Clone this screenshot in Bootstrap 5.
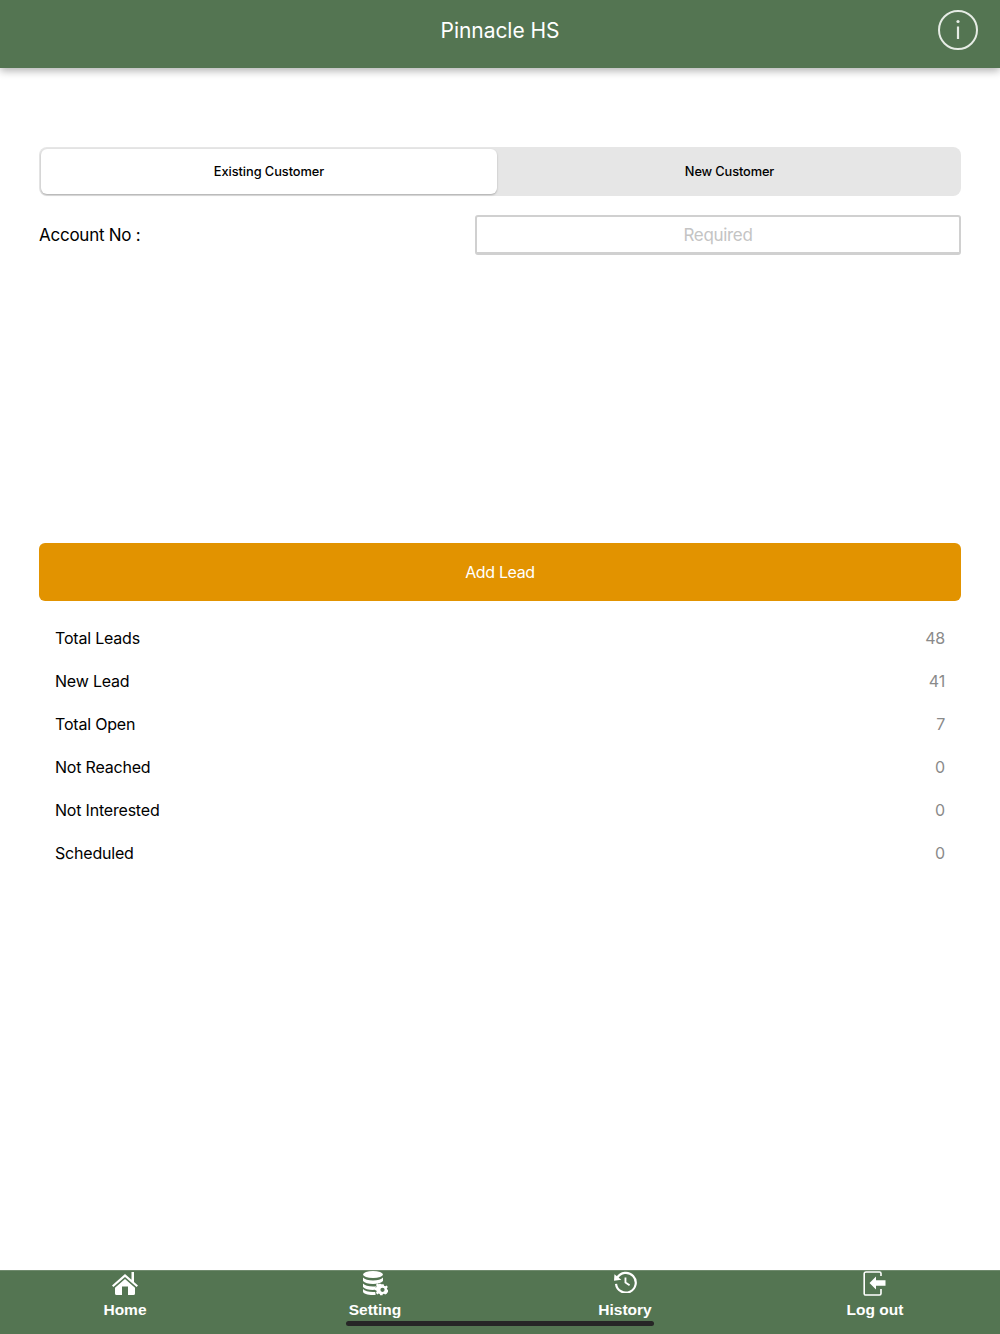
<!DOCTYPE html>
<html lang="en">
<head>
<meta charset="utf-8">
<title>Pinnacle HS</title>
<link href="https://cdn.jsdelivr.net/npm/bootstrap@5.3.0/dist/css/bootstrap.min.css" rel="stylesheet">
<style>
html,body{height:100%;}
body{font-family:Inter,"Liberation Sans",sans-serif;color:#000;background:#fff;overflow:hidden;}
.shell{height:1334px;}
.topbar{height:68px;background:#547552;color:#fff;box-shadow:0 3px 8px rgba(0,0,0,.3);display:grid;grid-template-columns:1fr auto 1fr;align-items:center;padding:0 22px 8px;position:relative;}
.topbar-title{font-size:21px;line-height:24px;letter-spacing:-.05px;padding-top:1px;}
.info-ic{width:40px;height:40px;justify-self:end;display:block;}
.content{padding:79px 39px 0;}
.segment{height:49px;background:#e6e6e6;border-radius:8px;padding:2px;}
.seg-item{font-size:12.800px;font-weight:500;line-height:16px;letter-spacing:-.06px;}
.seg-active{width:456px;background:#fff;border-radius:6px;box-shadow:0 1px 2px rgba(0,0,0,.25);}
.seg-rest{flex:1;padding-left:3px;letter-spacing:-.12px;}
.field-row{margin-top:19px;height:40px;}
.field-label{font-size:17px;letter-spacing:-.25px;padding-top:2px;}
.field-input{width:486px;height:40px;border:2px solid #d0d0d0;border-radius:3px;border-bottom-width:3px;text-align:center;font-size:17px;padding:1px 0 0;font-family:inherit;letter-spacing:-.3px;outline:none;box-shadow:none;}
.field-input::placeholder{color:#c4c4c4;opacity:1;}
.add-btn{display:block;width:100%;margin-top:288px;height:58px;background:#e29300;border:0;border-radius:6px;color:#fff;font-size:16px;letter-spacing:-.35px;padding:0;}
.add-btn:hover{background:#e29300;color:#fff;}
.stats{margin-top:15px;}
.stats .list-group-item{height:43px;border:0;padding:0 16px;background:transparent;font-size:16px;letter-spacing:-.2px;color:#000;}
.stat-val{color:#8a8a8a;}
.tabbar{height:64px;background:#547552;position:relative;border-top:1px solid #6f8a6d;}
.tab-item{flex:1 1 0;color:#fff;}
.tab-ic{height:26px;display:flex;align-items:flex-start;justify-content:center;}
.tab-lbl{font-family:"Liberation Sans",Arial,sans-serif;font-weight:700;font-size:15.500px;line-height:18px;margin-top:4px;}
.home-bar{position:absolute;left:346px;bottom:8px;width:308px;height:5px;border-radius:3px;background:#262626;}
</style>
</head>
<body>
<div class="shell d-flex flex-column">
  <header class="topbar">
    <span></span>
    <div class="topbar-title">Pinnacle HS</div>
    <svg class="info-ic" viewBox="0 0 40 40" fill="none" stroke="#e6ece5" stroke-width="2">
      <circle cx="20" cy="20" r="19"/>
      <path d="M20 16.500V29" stroke-width="2.200"/>
      <circle cx="20" cy="11.500" r="1.600" fill="#e6ece5" stroke="none"/>
    </svg>
  </header>

  <main class="content flex-grow-1">
    <div class="segment d-flex">
      <div class="seg-item seg-active d-flex align-items-center justify-content-center">Existing Customer</div>
      <div class="seg-item seg-rest d-flex align-items-center justify-content-center">New Customer</div>
    </div>
    <div class="field-row d-flex align-items-center justify-content-between">
      <label class="field-label" for="acct">Account No :</label>
      <input id="acct" class="field-input form-control" placeholder="Required">
    </div>
    <button class="add-btn btn" type="button">Add Lead</button>
    <ul class="stats list-group list-group-flush">
      <li class="list-group-item d-flex justify-content-between align-items-center"><span>Total Leads</span><span class="stat-val">48</span></li>
      <li class="list-group-item d-flex justify-content-between align-items-center"><span>New Lead</span><span class="stat-val">41</span></li>
      <li class="list-group-item d-flex justify-content-between align-items-center"><span>Total Open</span><span class="stat-val">7</span></li>
      <li class="list-group-item d-flex justify-content-between align-items-center"><span>Not Reached</span><span class="stat-val">0</span></li>
      <li class="list-group-item d-flex justify-content-between align-items-center"><span>Not Interested</span><span class="stat-val">0</span></li>
      <li class="list-group-item d-flex justify-content-between align-items-center"><span>Scheduled</span><span class="stat-val">0</span></li>
    </ul>
  </main>

  <nav class="tabbar d-flex">
    <div class="tab-item text-center">
      <div class="tab-ic">
        <svg width="28" height="25" viewBox="0 0 28 25" fill="#fff">
          <path d="M14 3 1 14.500l1.400 1.600L14 6l11.600 10.100 1.400-1.600L23 11V1h-2.500v7.800z"/>
          <path fill-rule="evenodd" d="M14 8 4 16.700V22.500a1.500 1.500 0 0 0 1.500 1.500h17a1.500 1.500 0 0 0 1.500-1.500V16.700zM11 15.500h6V24h-6z"/>
        </svg>
      </div>
      <div class="tab-lbl">Home</div>
    </div>
    <div class="tab-item text-center">
      <div class="tab-ic">
        <svg width="26" height="25" viewBox="0 0 26 25" fill="#fff">
          <ellipse cx="11" cy="3.500" rx="10" ry="3.500"/>
          <path d="M1 6.500c1.500 2 5.500 3 10 3s8.500-1 10-3V10c-1.500 2-5.500 3-10 3S2.500 12 1 10z"/>
          <path d="M1 12.500c1.500 2 5.500 3 10 3 1.300 0 2.500-.1 3.500-.2-.8 1-1.300 2-1.500 3.500-.6.100-1.300.100-2 .100-4.500 0-8.500-1-10-3z"/>
          <path d="M1 18c1.500 2 5.500 3 10 3h2.200l.5 2.800c-.9.100-1.800.200-2.700.200-5.500 0-10-1.500-10-3.500z"/>
          <path fill-rule="evenodd" d="M18.600 12.500h2.800l.4 1.700 1.500.7 1.500-.9 1.500 1.900-1.200 1.300.3 1.500 1.600.6v2.400l-1.600.7-.4 1.400-1.900.8-1.300-1-1.400.5-.4 1.300h-2.800l-.4-1.300-1.400-.6-1.400 1-1.800-1.900 1-1.300-.5-1.300-1.600-.6v-2.600l1.600-.6.500-1.500-1-1.300 1.900-1.900 1.400.9 1.500-.7zM20 16.500a2.500 2.500 0 1 0 0 5 2.500 2.500 0 0 0 0-5z" transform="translate(3.500 2.600) scale(.85)"/>
        </svg>
      </div>
      <div class="tab-lbl">Setting</div>
    </div>
    <div class="tab-item text-center">
      <div class="tab-ic">
        <svg width="26" height="22" viewBox="0 0 26 24" fill="none" stroke="#fff" stroke-width="2.400">
          <path d="M4.500 7.500A10.800 10.800 0 1 1 3.200 14"/>
          <path d="M1.500 3.500 9 9.500l-8 1z" fill="#fff" stroke="none"/>
          <path d="M13.500 7v5.500l4.500 3" stroke-width="2"/>
        </svg>
      </div>
      <div class="tab-lbl">History</div>
    </div>
    <div class="tab-item text-center">
      <div class="tab-ic">
        <svg width="24" height="25" viewBox="0 0 24 25" fill="none" stroke="#fff" stroke-width="1.600">
          <path d="M18 5V2.500A1.500 1.500 0 0 0 16.500 1H3A1.800 1.800 0 0 0 1.200 2.800v20A1.500 1.500 0 0 0 2.700 24h13.800a1.500 1.500 0 0 0 1.500-1.500V18"/>
          <path d="M6.500 12 13 5.500V9.300h9.500v5.400H13V18.500z" fill="#fff" stroke="none"/>
        </svg>
      </div>
      <div class="tab-lbl">Log out</div>
    </div>
    <div class="home-bar"></div>
  </nav>
</div>
<script src="https://cdn.jsdelivr.net/npm/bootstrap@5.3.0/dist/js/bootstrap.bundle.min.js"></script>
</body>
</html>
